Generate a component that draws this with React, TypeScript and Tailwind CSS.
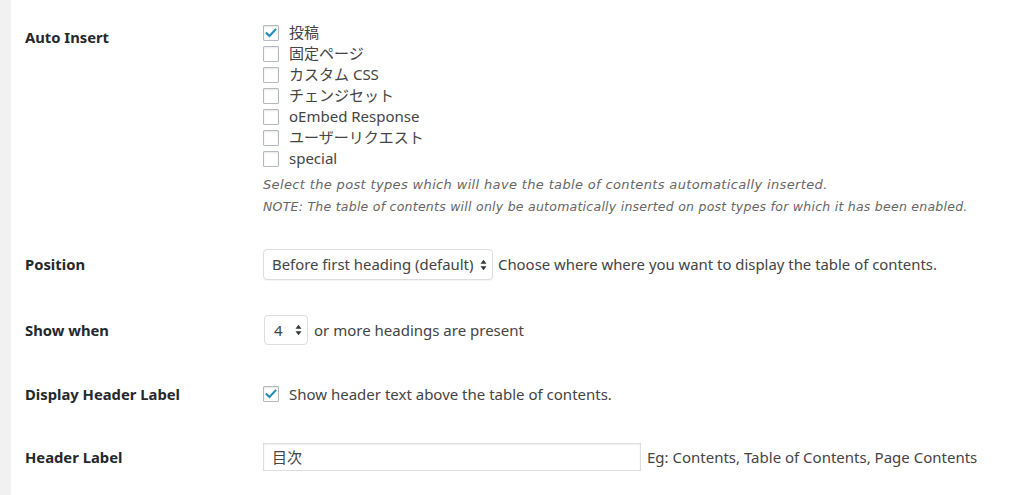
import React from 'react';

const font = { fontFamily: '"Noto Sans", "Noto Sans CJK JP", sans-serif' };
const noteFont = { fontFamily: '"DejaVu Sans", "Noto Sans", sans-serif' };

function Check({ on }: { on?: boolean }) {
  return (
    <span className="relative inline-flex h-4 w-4 shrink-0 items-center justify-center rounded-[1px] border border-[#b4b9be] bg-white shadow-[inset_0_1px_2px_rgba(0,0,0,0.1)]">
      {on && (
        <svg viewBox="0 0 16 16" className="h-[14px] w-[14px]">
          <path d="M3 8.2 L6.3 11.4 L13 4.2" fill="none" stroke="#1e8cbe" strokeWidth="2.4" strokeLinecap="square" />
        </svg>
      )}
    </span>
  );
}

function Arrows() {
  return (
    <svg viewBox="0 0 8 14" className="h-[12px] w-[7px]">
      <path d="M4 1 L7.5 5.5 H0.5 Z" fill="#32373c" />
      <path d="M4 13 L7.5 8.5 H0.5 Z" fill="#32373c" />
    </svg>
  );
}

function Label({ children }: { children: React.ReactNode }) {
  return <div className="w-[238px] shrink-0 text-[14.8px] font-bold text-[#23282d]">{children}</div>;
}

const postTypes: [string, boolean][] = [
  ['投稿', true],
  ['固定ページ', false],
  ['カスタム CSS', false],
  ['チェンジセット', false],
  ['oEmbed Response', false],
  ['ユーザーリクエスト', false],
  ['special', false],
];

export default function App() {
  return (
    <div className="flex h-[495px] w-[1024px] overflow-hidden bg-white text-[#444]" style={font}>
      <div className="w-[11px] shrink-0 bg-[#f1f1f1]" />
      <div className="flex flex-1 flex-col pl-[14px]">
        <div className="mt-[22px] flex">
          <Label>
            <div className="pt-[5px] leading-5">Auto Insert</div>
          </Label>
          <div className="flex flex-col">
            {postTypes.map(([name, on]) => (
              <label key={name} className="flex h-[21px] items-center gap-[10px] text-[15px]">
                <Check on={on} />
                <span>{name}</span>
              </label>
            ))}
            <div className="mt-[6px] text-[13px] leading-5 tracking-[0.35px] italic text-[#666]" style={noteFont}>
              Select the post types which will have the table of contents automatically inserted.
            </div>
            <div className="mt-[2px] text-[12.5px] leading-5 tracking-[0.25px] italic text-[#666]" style={noteFont}>
              NOTE: The table of contents will only be automatically inserted on post types for which it has been enabled.
            </div>
          </div>
        </div>

        <div className="mt-[32px] flex h-[31px] items-center">
          <Label>Position</Label>
          <div className="flex items-center gap-[5px] text-[14.9px]">
            <div className="flex h-[31px] w-[230px] items-center justify-between rounded-[4px] border border-[#ddd] bg-white pl-[8px] pr-[5px] shadow-[0_1px_1px_rgba(0,0,0,0.04)]">
              <span>Before first heading (default)</span>
              <Arrows />
            </div>
            <span>Choose where where you want to display the table of contents.</span>
          </div>
        </div>

        <div className="mt-[35px] flex h-[30px] items-center">
          <Label>Show when</Label>
          <div className="flex items-center gap-[6px] text-[15px]">
            <div className="ml-[1px] flex h-[30px] w-[44px] items-center justify-between rounded-[4px] border border-[#ddd] bg-white pl-[9px] pr-[5px]">
              <span>4</span>
              <Arrows />
            </div>
            <span>or more headings are present</span>
          </div>
        </div>

        <div className="mt-[34px] flex h-[30px] items-center">
          <Label>Display Header Label</Label>
          <label className="flex items-center gap-[10px] text-[15px]">
            <Check on />
            <span>Show header text above the table of contents.</span>
          </label>
        </div>

        <div className="mt-[34px] flex h-[28px] items-center">
          <Label>Header Label</Label>
          <div className="flex items-center gap-[6px] text-[15px]">
            <div className="flex h-[28px] w-[378px] items-center border border-[#ddd] bg-white px-[8px] shadow-[inset_0_1px_2px_rgba(0,0,0,0.07)]">
              目次
            </div>
            <span>Eg: Contents, Table of Contents, Page Contents</span>
          </div>
        </div>
      </div>
    </div>
  );
}
